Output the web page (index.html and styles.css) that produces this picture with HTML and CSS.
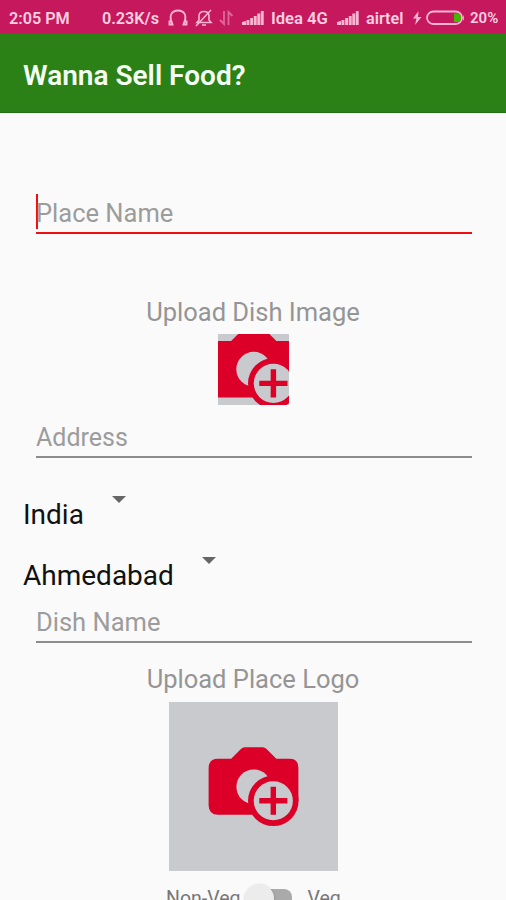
FILE: index.html
```html
<!DOCTYPE html>
<html lang="en">
<head>
  <meta charset="UTF-8">
  <title>Wanna Sell Food?</title>
  <meta name="viewport" content="width=device-width, initial-scale=1.0">
  <link rel="stylesheet" href="styles.css">
</head>
<body>
  <svg class="defs" width="0" height="0">
    <symbol id="signal" viewBox="0 0 22 16">
      <path d="M0 15v-3l4-1v4zM4.500 15v-5h2.900v5zM8.200 15V8h2.900v7zM11.800 15V6h2.900v9zM15.300 15V3.500h2.900V15zM18.800 15V1h2.900v14z"/>
    </symbol>
    <g id="camera">
      <path fill="#dc0029" d="M49 56.500h13l10-10q1.500-1.500 3.500-1.500h18q2 0 3.500 1.500l10 10h13q9 0 9 9V98.500H104v14H49q-9.500 0-9.500-9.500V66q0-9.500 9.500-9.500z"/>
      <circle cx="84.500" cy="84.500" r="17.300" fill="#c8cacd"/>
      <circle cx="104" cy="98.500" r="25.200" fill="#dc0029"/>
      <circle cx="104" cy="98.500" r="19.500" fill="#c8cacd"/>
      <path d="M104 84.500v28M90 98.500h28" stroke="#dc0029" stroke-width="5.400"/>
    </g>
  </svg>

  <div class="statusbar">
    <span>2:05 PM</span>
    <span>0.23K/s</span>
    <svg width="20" height="18" viewBox="0 0 20 18" fill="none" stroke="#fbb5d3" stroke-width="1.900">
      <path d="M4.500 15.500H1.500v-3h2zM15.500 15.500h3v-3h-2zM3.500 13C1 6 4 1.500 10 1.500S19 6 16.500 13"/>
    </svg>
    <svg width="18" height="18" viewBox="0 0 18 18" fill="none" stroke="#fbb5d3" stroke-width="1.600">
      <path d="M2 13.500h14l-2-2.500V7q0-4.500-5-4.500T4 7v4zM7 16h4M1 17L16 1"/>
    </svg>
    <svg width="15" height="18" viewBox="0 0 15 18" fill="none" stroke="#e0679b" stroke-width="1.800">
      <path d="M5 2v13L1 11M9.500 16V3l4 4"/>
    </svg>
    <svg class="signal" width="22" height="16"><use href="#signal"/></svg>
    <span class="carrier">Idea 4G</span>
    <svg class="signal" width="22" height="16"><use href="#signal"/></svg>
    <span>airtel</span>
    <svg class="bolt" width="9" height="14" viewBox="0 0 9 14"><path d="M5.500 0L0 7.500h3.500L2 14l6.500-8H5z"/></svg>
    <svg width="39" height="16" viewBox="0 0 39 16">
      <rect x="1" y="1.500" width="35" height="12.500" rx="6.200" fill="none" stroke="#fbb5d3" stroke-width="1.800"/>
      <path d="M37 5q2 3 0 6z" fill="#fbb5d3"/>
      <path d="M28 3.500h3q4 0 4 4.300t-4 4.300h-3z" fill="#43b802"/>
    </svg>
    <span class="percent">20%</span>
  </div>

  <header class="appbar">
    <h1>Wanna Sell Food?</h1>
  </header>

  <main class="form">
    <div class="field place focused"><span class="caret"></span>Place Name</div>
    <div class="upload-label dish-image">Upload Dish Image</div>
    <svg class="tile small" viewBox="49 49.500 70.500 70.500"><use href="#camera"/></svg>
    <div class="field address">Address</div>
    <div class="spinner country"><span>India</span><i class="arrow"></i></div>
    <div class="spinner city"><span>Ahmedabad</span><i class="arrow"></i></div>
    <div class="field dish">Dish Name</div>
    <div class="upload-label place-logo">Upload Place Logo</div>
    <svg class="tile large" viewBox="0 0 168.500 168.500"><use href="#camera"/></svg>
    <div class="veg-switch">
      <span>Non-Veg</span>
      <span class="switch"><span class="thumb"></span></span>
      <span>Veg</span>
    </div>
  </main>
</body>
</html>
```
FILE: styles.css
```css
:root {
  --pink: #c6185c;
  --green: #2b8116;
  --hint: #9c9c9c;
  --line: #8c8c8c;
  --red: #ee1010;
}

* {
  box-sizing: border-box;
}

body {
  margin: 0;
  height: 900px;
  overflow: hidden;
  background: #fafafa;
  font-family: Roboto, sans-serif;
  color: #111;
}

.defs {
  display: block;
}

.statusbar {
  display: grid;
  grid-template-columns: 93px 66px 27px 24px 23px 29px 66px 29px 47px 13px 44px 36px;
  align-items: center;
  height: 34px;
  padding: 2px 0 0 9px;
  background: var(--pink);
  color: #fdd0e2;
  font-size: 16.200px;
  font-weight: 600;
  white-space: nowrap;
}

.signal,
.bolt {
  fill: #fbb5d3;
}

.carrier {
  font-size: 16.600px;
}

.percent {
  font-size: 15px;
}

.appbar {
  display: flex;
  align-items: center;
  height: 79px;
  padding: 5px 23px 0;
  background: var(--green);
  border-bottom: 1px solid #237010;
}

.appbar h1 {
  margin: 0;
  color: #f4fff2;
  font-size: 28px;
  font-weight: 600;
}

.form {
  display: flex;
  flex-direction: column;
}

.field {
  display: flex;
  align-items: center;
  height: 40px;
  margin: 0 34px 0 36px;
  border-bottom: 2px solid var(--line);
  color: var(--hint);
  font-size: 25.500px;
}

.focused {
  border-color: var(--red);
}

.caret {
  width: 2px;
  height: 35px;
  margin: -3px -2px 0 0;
  background: var(--red);
}

.place {
  margin-top: 81px;
}

.upload-label {
  color: #959595;
  font-size: 25.500px;
  line-height: 30px;
  text-align: center;
}

.dish-image {
  margin-top: 63px;
}

.tile {
  align-self: center;
  background: #c8cacd;
}

.small {
  width: 71px;
  height: 71px;
  margin-top: 7px;
}

.large {
  width: 169px;
  height: 169px;
  margin-top: 8px;
}

.address {
  height: 40px;
  margin-top: 13px;
  font-size: 25px;
}

.spinner {
  display: flex;
  height: 36px;
  padding-left: 23px;
  font-size: 28px;
  line-height: 38px;
}

.arrow {
  width: 0;
  height: 0;
  margin-left: 28px;
  border: 7px solid transparent;
  border-top-color: #666;
  border-bottom: 0;
}

.country {
  margin-top: 38px;
}

.city {
  margin-top: 25px;
}

.dish {
  margin-top: 10px;
}

.place-logo {
  margin-top: 21px;
}

.veg-switch {
  display: flex;
  margin: 13px 0 0 166px;
  color: #777;
  font-size: 19.500px;
  line-height: 30px;
}

.switch {
  width: 47px;
  height: 22px;
  margin: 5px 15px 0 5px;
  border-radius: 8px;
  background: linear-gradient(to right, transparent 16px, #aaa 16px);
}

.thumb {
  display: block;
  width: 29px;
  height: 29px;
  margin-top: -5px;
  border-radius: 50%;
  background: #ececec;
  box-shadow: 0 1px 3px rgba(0,0,0,0.2);
}
```
